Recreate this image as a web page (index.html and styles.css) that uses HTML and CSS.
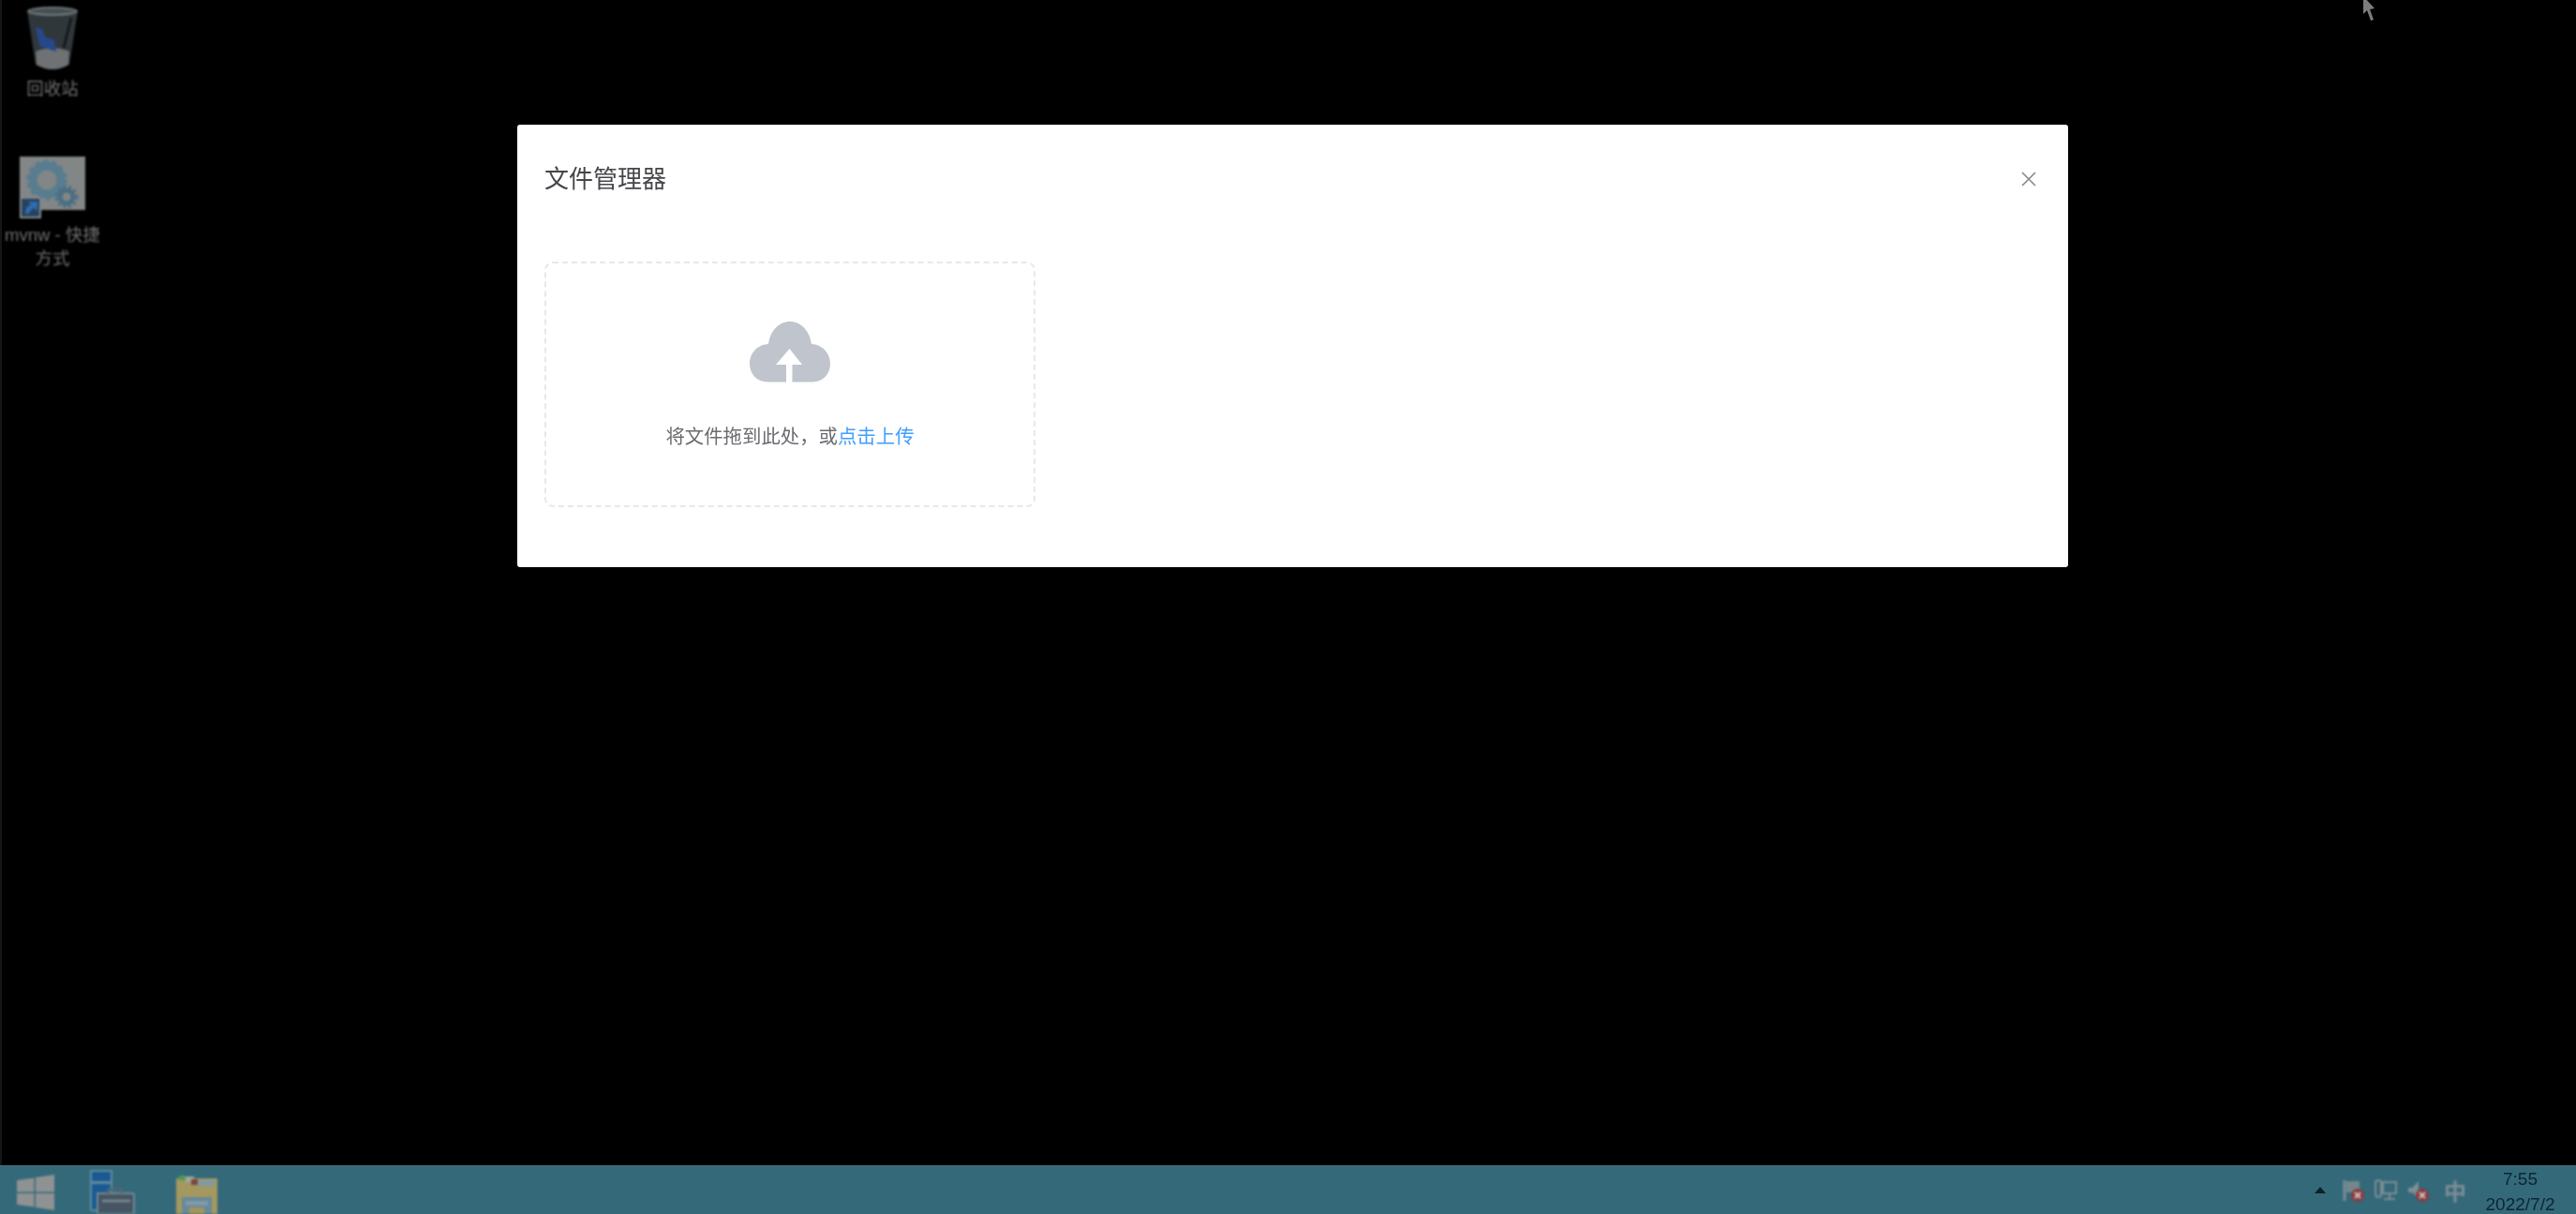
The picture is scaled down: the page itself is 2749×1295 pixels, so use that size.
FILE: index.html
```html
<!DOCTYPE html>
<html lang="zh-CN">
<head>
<meta charset="utf-8">
<title>文件管理器</title>
<link rel="stylesheet" href="styles.css">
</head>
<body>
<main class="desktop">
  <div class="desk-icon recycle">
    <svg class="trash" viewBox="0 0 56 70" width="56" height="70">
      <path d="M1 4 Q28 -3 55 4 L46 62 Q28 72 10 62 Z" fill="#30373b"/>
      <path d="M10 48 Q28 40 46 48 L45 62 Q28 72 11 62 Z" fill="#6e7274"/>
      <path d="M10 22 L17 24 L20 32 L30 36 L32 48 L20 44 L14 42 Z" fill="#26478a"/>
      <ellipse cx="28" cy="5" rx="26" ry="4" fill="#454e52" stroke="#7f878a" stroke-width="1.5"/>
      <path d="M48 12 L40 44" stroke="#15181a" stroke-width="3"/>
    </svg>
    <span class="desk-label">回收站</span>
  </div>
  <div class="desk-icon mvnw">
    <div class="gear-tile">
      <svg viewBox="0 0 70 58" width="70" height="58">
        <rect width="70" height="57" fill="#828686"/>
        <circle cx="29" cy="25" r="15" fill="none" stroke="#587c90" stroke-width="9"/>
        <circle cx="29" cy="25" r="20" fill="none" stroke="#587c90" stroke-width="3.5" stroke-dasharray="5 4"/>
        <circle cx="50" cy="43" r="7" fill="none" stroke="#4a6e82" stroke-width="5"/>
        <circle cx="50" cy="43" r="11" fill="none" stroke="#4a6e82" stroke-width="2.5" stroke-dasharray="3 3"/>
      </svg>
      <svg class="shortcut" viewBox="0 0 23 23" width="23" height="23">
        <rect width="23" height="23" fill="#858989"/>
        <rect x="2" y="2" width="19" height="19" fill="#25435f"/>
        <path d="M6 18 Q6 10 12 8 L9 5 H19 V15 L16 12 Q11 13 10 18 Z" fill="#2f6cb0"/>
      </svg>
    </div>
    <span class="desk-label">mvnw - 快捷<br>方式</span>
  </div>
  <svg class="cursor" viewBox="0 0 14 24" width="14" height="24">
    <path d="M1 -4 V15 L5 11 L9 22 L12 21 L8 10 L13 9 Z" fill="#7d7d7d"/>
  </svg>

  <section class="dialog">
    <header class="dialog-head">
      <h1 class="dialog-title">文件管理器</h1>
      <svg class="close" viewBox="0 0 16 16" width="16" height="16">
        <path d="M1 1 L15 15 M15 1 L1 15" stroke="#85888f" stroke-width="1.6" fill="none"/>
      </svg>
    </header>
    <div class="upload">
      <svg class="cloud" viewBox="0 0 86 65" width="86" height="65">
        <path fill-rule="evenodd" fill="#c0c4cc" d="M19 64.5 C8 64.5 0 56 0 45 C0 33 9 24.5 20 24 C22 10 31 0 43 0 C55 0 64 10 66 24 C77 24.5 86 33 86 45 C86 56 78 64.5 67 64.5 H45.5 V46 H56 L42.5 29 L28 46 H39 V64.5 Z"/>
      </svg>
      <p class="upload-text">将文件拖到此处，或<em class="upload-link">点击上传</em></p>
    </div>
  </section>
</main>
<footer class="taskbar">
  <div class="task-left">
    <svg class="win" viewBox="0 0 40 38" width="40" height="38">
      <path d="M0 6 L18.500 3.500 V18.500 H0 Z M20 3 L40 0 V18.500 H20 Z M0 20 H18.500 V34.500 L0 32 Z M20 20 H40 V38 L20 35 Z" fill="#8f9292"/>
    </svg>
    <svg class="server" viewBox="0 0 48 47" width="48" height="47">
      <rect x="1" y="1" width="22" height="42" fill="#1a5a92" stroke="#5f8ba0" stroke-width="2"/>
      <rect x="2" y="12" width="20" height="3" fill="#5f8ba0"/>
      <path d="M8 25 H45 Q47 25 47 27 V47 H8 Z" fill="#465561" stroke="#6f8b9a" stroke-width="2"/>
      <path d="M20 25 V21 H34 V25" fill="none" stroke="#56666f" stroke-width="3"/>
      <path d="M13 33 H43" stroke="#7d8c95" stroke-width="2.500"/>
    </svg>
    <svg class="explorer" viewBox="0 0 46 43" width="46" height="43">
      <path d="M1 5 H45 V43 H1 Z" fill="#a4985f"/>
      <path d="M4 2 H11 V7 H4 Z" fill="#4f9a54"/>
      <path d="M11 3 H20 V9 H11 Z" fill="#a3a6a0"/>
      <path d="M17 6 H24 V12 H17 Z" fill="#7d4540"/>
      <path d="M24 7 H42 V13 H24 Z" fill="#7f9aa6"/>
      <path d="M7 25 H39 V43 H7 Z" fill="#67899a"/>
      <path d="M11 29 H35 V34 H11 Z" fill="#7d9aa8"/>
      <path d="M15 36 H31 V43 H15 Z" fill="#a3945a"/>
    </svg>
  </div>
  <div class="tray">
    <svg class="tray-arrow" viewBox="0 0 12 7" width="12" height="7"><path d="M0 7 L6 0 L12 7 Z" fill="#0e1f28"/></svg>
    <svg class="tray-icon tray-flag" viewBox="0 0 24 24" width="24" height="24">
      <path d="M2 1 V23" stroke="#7d8e94" stroke-width="3"/><path d="M4 2 H18 V14 H4 Z" fill="#74878e"/>
      <circle cx="16" cy="17" r="7" fill="#8f3a3e"/><path d="M13 14 L19 20 M19 14 L13 20" stroke="#c9c9c9" stroke-width="2"/>
    </svg>
    <svg class="tray-icon" viewBox="0 0 24 24" width="24" height="24">
      <rect x="9" y="3" width="14" height="12" fill="none" stroke="#7d8e94" stroke-width="2"/>
      <rect x="1" y="1" width="6" height="18" rx="3" fill="none" stroke="#7d8e94" stroke-width="2"/>
      <path d="M16 15 V20 M10 21 H22" stroke="#7d8e94" stroke-width="2"/>
    </svg>
    <svg class="tray-icon" viewBox="0 0 24 24" width="24" height="24">
      <path d="M1 9 H5 L12 2 V20 L5 14 H1 Z" fill="#7d8e94"/>
      <circle cx="16" cy="17" r="7" fill="#8f3a3e"/><path d="M13 14 L19 20 M19 14 L13 20" stroke="#c9c9c9" stroke-width="2"/>
    </svg>
    <span class="ime">中</span>
    <time class="clock">7:55<br>2022/7/2</time>
  </div>
</footer>
</body>
</html>
```

FILE: styles.css
```css
* { box-sizing: border-box; }
html, body { height: 100%; margin: 0; }
body {
  display: flex;
  flex-direction: column;
  background: #000;
  font-family: "Liberation Sans", "Noto Sans CJK SC", sans-serif;
  overflow: hidden;
}
.desktop {
  position: relative;
  flex: 1;
  border-left: 2px solid #161616;
}
.desk-icon {
  position: absolute;
  display: flex;
  flex-direction: column;
  align-items: center;
  width: 108px;
  left: 0;
  filter: blur(0.8px);
}
.recycle { top: 7px; }
.mvnw { top: 167px; }
.trash { display: block; }
.desk-label {
  color: #6f6f6f;
  font-size: 18.500px;
  line-height: 25px;
  text-align: center;
}
.recycle .desk-label { margin-top: 5px; }
.mvnw .desk-label { margin-top: 13px; white-space: nowrap; }
.gear-tile { position: relative; height: 58px; }
.gear-tile svg { display: block; }
.gear-tile .shortcut { position: absolute; left: 0; top: 43px; }
.cursor { position: absolute; left: 2519px; top: 0; filter: blur(0.5px); }

.dialog {
  position: absolute;
  left: 550px;
  top: 133px;
  width: 1655px;
  height: 472px;
  background: #fff;
  border-radius: 3px;
  padding: 40px 29px 0;
}
.dialog-head {
  display: flex;
  align-items: center;
  justify-content: space-between;
  height: 36px;
  padding-right: 4px;
}
.dialog-title {
  margin: 0;
  font-size: 26px;
  font-weight: 400;
  line-height: 36px;
  color: #44464a;
  filter: blur(0.5px);
}
.close { display: block; margin-right: 1px; filter: blur(0.5px); }
.upload {
  display: flex;
  flex-direction: column;
  align-items: center;
  width: 524px;
  height: 262px;
  margin-top: 70px;
  padding-top: 62px;
  border: 2px dashed #e8e8e8;
  border-radius: 9px;
}
.cloud { display: block; }
.upload-text {
  margin: 42px 0 0;
  font-size: 20.4px;
  line-height: 32px;
  color: #6a6c70;
  filter: blur(0.5px);
}
.upload-link { font-style: normal; color: #409eff; }

.taskbar {
  flex: none;
  display: flex;
  justify-content: space-between;
  height: 52px;
  background: #34697a;
  border-top: 1px solid #44707f;
  overflow: hidden;
}
.task-left {
  display: flex;
  align-items: flex-start;
  padding: 9px 0 0 18px;
  filter: blur(1px);
}
.server { margin: -5px 0 0 38px; }
.explorer { margin: -1px 0 0 43px; }
.tray {
  display: flex;
  align-items: center;
  padding-right: 22px;
}
.tray-arrow { margin-right: 18px; filter: blur(0.7px); }
.tray-icon { margin-right: 11px; filter: blur(0.9px); }
.tray-flag { margin-right: 10px; }
.ime {
  margin: 0 20px 0 4px;
  font-size: 24px;
  font-weight: 700;
  color: #7d8e94;
  filter: blur(0.9px);
}
.clock {
  width: 75px;
  margin-top: 3px;
  color: #0c2532;
  font-size: 19px;
  line-height: 27px;
  text-align: center;
  white-space: nowrap;
  filter: blur(0.5px);
}
```
